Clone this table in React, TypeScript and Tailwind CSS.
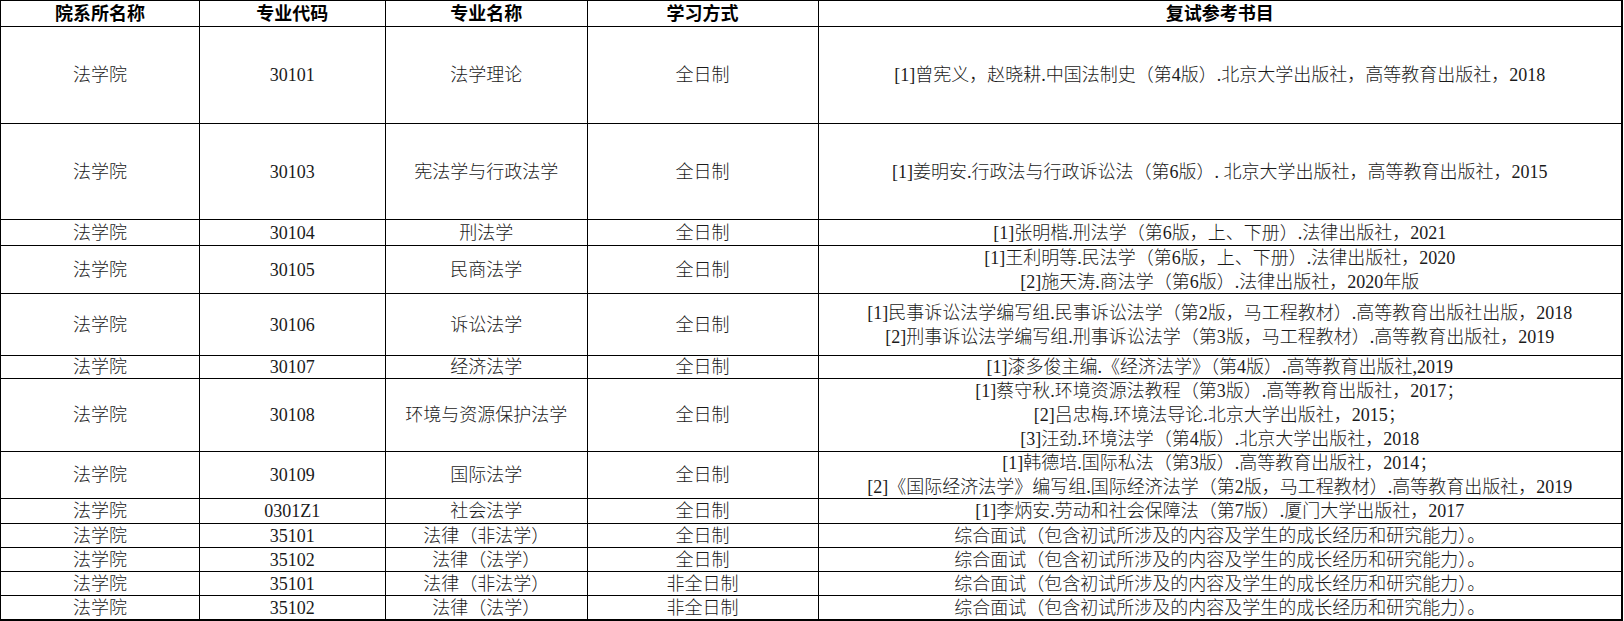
import React from "react";

type Row = {
	h: string;
	code: string;
	major: string;
	mode: string;
	books: string[];
};

const rows: Row[] = [
	{
		h: "h-[97px]",
		code: "30101",
		major: "法学理论",
		mode: "全日制",
		books: ["[1]曾宪义，赵晓耕.中国法制史（第4版）.北京大学出版社，高等教育出版社，2018"],
	},
	{
		h: "h-[96px]",
		code: "30103",
		major: "宪法学与行政法学",
		mode: "全日制",
		books: ["[1]姜明安.行政法与行政诉讼法（第6版）. 北京大学出版社，高等教育出版社，2015"],
	},
	{
		h: "h-[26px]",
		code: "30104",
		major: "刑法学",
		mode: "全日制",
		books: ["[1]张明楷.刑法学（第6版，上、下册）.法律出版社，2021"],
	},
	{
		h: "h-[48px]",
		code: "30105",
		major: "民商法学",
		mode: "全日制",
		books: [
			"[1]王利明等.民法学（第6版，上、下册）.法律出版社，2020",
			"[2]施天涛.商法学（第6版）.法律出版社，2020年版",
		],
	},
	{
		h: "h-[62px]",
		code: "30106",
		major: "诉讼法学",
		mode: "全日制",
		books: [
			"[1]民事诉讼法学编写组.民事诉讼法学（第2版，马工程教材）.高等教育出版社出版，2018",
			"[2]刑事诉讼法学编写组.刑事诉讼法学（第3版，马工程教材）.高等教育出版社，2019",
		],
	},
	{
		h: "h-[23px]",
		code: "30107",
		major: "经济法学",
		mode: "全日制",
		books: ["[1]漆多俊主编.《经济法学》（第4版）.高等教育出版社,2019"],
	},
	{
		h: "h-[73px]",
		code: "30108",
		major: "环境与资源保护法学",
		mode: "全日制",
		books: [
			"[1]蔡守秋.环境资源法教程（第3版）.高等教育出版社，2017；",
			"[2]吕忠梅.环境法导论.北京大学出版社，2015；",
			"[3]汪劲.环境法学（第4版）.北京大学出版社，2018",
		],
	},
	{
		h: "h-[47px]",
		code: "30109",
		major: "国际法学",
		mode: "全日制",
		books: [
			"[1]韩德培.国际私法（第3版）.高等教育出版社，2014；",
			"[2]《国际经济法学》编写组.国际经济法学（第2版，马工程教材）.高等教育出版社，2019",
		],
	},
	{
		h: "h-[25px]",
		code: "0301Z1",
		major: "社会法学",
		mode: "全日制",
		books: ["[1]李炳安.劳动和社会保障法（第7版）.厦门大学出版社，2017"],
	},
	{
		h: "h-[24px]",
		code: "35101",
		major: "法律（非法学）",
		mode: "全日制",
		books: ["综合面试（包含初试所涉及的内容及学生的成长经历和研究能力）。"],
	},
	{
		h: "h-[24px]",
		code: "35102",
		major: "法律（法学）",
		mode: "全日制",
		books: ["综合面试（包含初试所涉及的内容及学生的成长经历和研究能力）。"],
	},
	{
		h: "h-[24px]",
		code: "35101",
		major: "法律（非法学）",
		mode: "非全日制",
		books: ["综合面试（包含初试所涉及的内容及学生的成长经历和研究能力）。"],
	},
	{
		h: "h-[25px] border-b-2",
		code: "35102",
		major: "法律（法学）",
		mode: "非全日制",
		books: ["综合面试（包含初试所涉及的内容及学生的成长经历和研究能力）。"],
	},
];

const cell = "flex items-center justify-center border-r border-black";

export default function App() {
	return (
		<div className="min-h-screen w-full bg-white font-['Liberation_Serif','Noto_Sans_CJK_SC',serif] text-[18px]">
			<div className="flex w-[1623px] flex-col border-l border-t border-black">
				<div className="flex h-[26px] border-b border-black font-bold leading-[24px] text-black">
					<div className={`${cell} w-[199px]`}>院系所名称</div>
					<div className={`${cell} w-[186px]`}>专业代码</div>
					<div className={`${cell} w-[202px]`}>专业名称</div>
					<div className={`${cell} w-[231px]`}>学习方式</div>
					<div className={`${cell} w-[805px] border-r-2`}>复试参考书目</div>
				</div>
				{rows.map((r, i) => (
					<div
						key={i}
						className={`flex ${r.h} border-b border-black font-light leading-[24px] text-[#1a1a1a]`}
					>
						<div className={`${cell} w-[199px]`}>法学院</div>
						<div className={`${cell} w-[186px]`}>{r.code}</div>
						<div className={`${cell} w-[202px]`}>{r.major}</div>
						<div className={`${cell} w-[231px]`}>{r.mode}</div>
						<div className={`${cell} w-[805px] flex-col border-r-2`}>
							{r.books.map((b, j) => (
								<div key={j} className="whitespace-nowrap text-center">
									{b}
								</div>
							))}
						</div>
					</div>
				))}
			</div>
		</div>
	);
}
